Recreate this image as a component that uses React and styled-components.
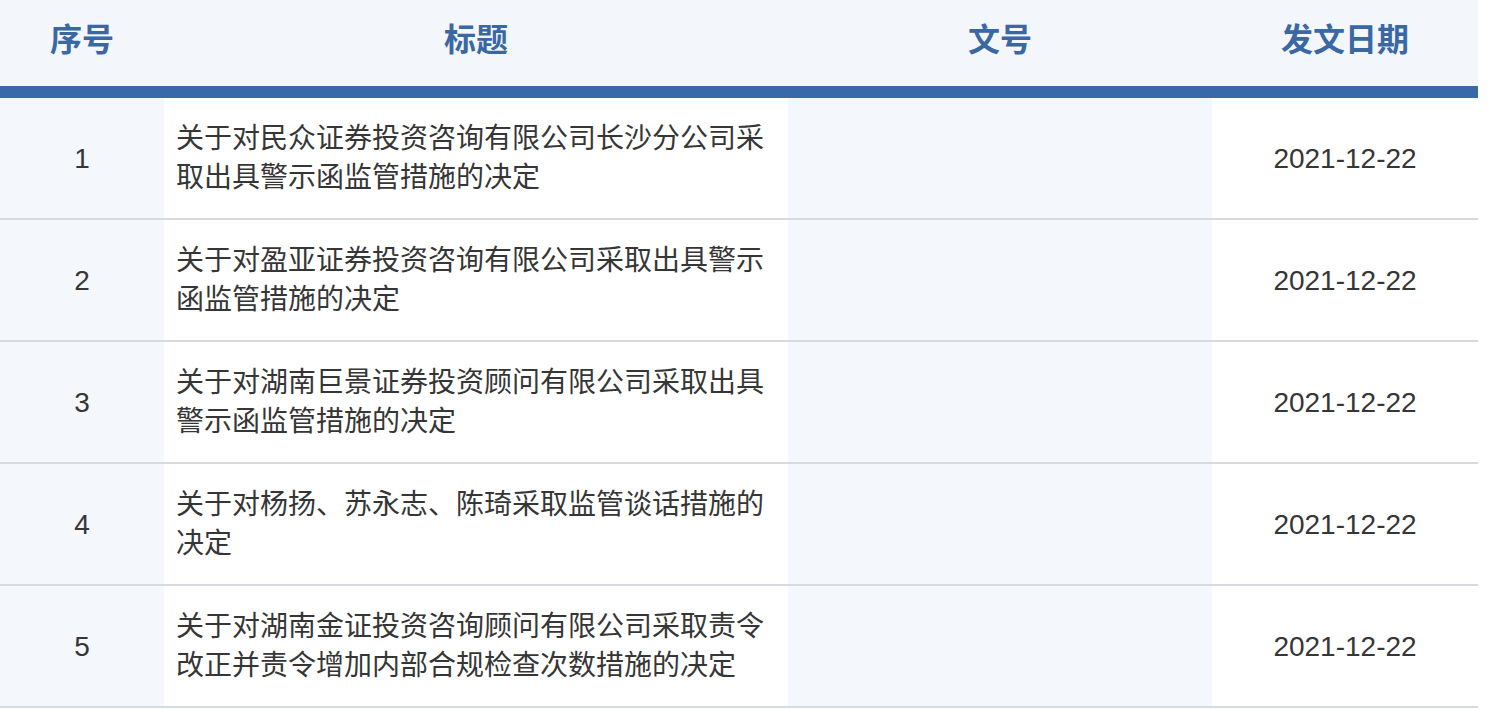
import React from "react";
import styled, { createGlobalStyle } from "styled-components";

const GlobalStyle = createGlobalStyle`
  body {
    margin: 0;
    background: #fff;
    font-family: "Liberation Sans", Arial, "Noto Sans CJK SC", sans-serif;
  }
`;

const rows = [
  {
    no: 1,
    title: "关于对民众证券投资咨询有限公司长沙分公司采取出具警示函监管措施的决定",
    doc: "",
    date: "2021-12-22",
  },
  {
    no: 2,
    title: "关于对盈亚证券投资咨询有限公司采取出具警示函监管措施的决定",
    doc: "",
    date: "2021-12-22",
  },
  {
    no: 3,
    title: "关于对湖南巨景证券投资顾问有限公司采取出具警示函监管措施的决定",
    doc: "",
    date: "2021-12-22",
  },
  {
    no: 4,
    title: "关于对杨扬、苏永志、陈琦采取监管谈话措施的决定",
    doc: "",
    date: "2021-12-22",
  },
  {
    no: 5,
    title: "关于对湖南金证投资咨询顾问有限公司采取责令改正并责令增加内部合规检查次数措施的决定",
    doc: "",
    date: "2021-12-22",
  },
];

function App() {
  return (
    <>
      <GlobalStyle />
      <Table>
        <colgroup>
          <col style={{ width: 164 }} />
          <col style={{ width: 624 }} />
          <col style={{ width: 424 }} />
          <col style={{ width: 266 }} />
        </colgroup>
        <thead>
          <tr>
            <Th>序号</Th>
            <Th>标题</Th>
            <Th>文号</Th>
            <Th>发文日期</Th>
          </tr>
        </thead>
        <tbody>
          {rows.map((r) => (
            <tr key={r.no}>
              <Td shade>{r.no}</Td>
              <Td left>{r.title}</Td>
              <Td shade>{r.doc}</Td>
              <Td>{r.date}</Td>
            </tr>
          ))}
        </tbody>
      </Table>
    </>
  );
}

const Table = styled.table`
  width: 1478px;
  table-layout: fixed;
  border-collapse: separate;
  border-spacing: 0;
`;

const Th = styled.th`
  box-sizing: border-box;
  height: 98px;
  padding: 0 0 6px;
  background: #f3f6fa;
  border-bottom: 12px solid #386aa9;
  color: #3a68a5;
  font-family: "Liberation Sans", "Noto Sans CJK SC", sans-serif;
  font-size: 32px;
  font-weight: 700;
  text-align: center;
  vertical-align: middle;
  line-height: 1;
`;

const Td = styled.td`
  box-sizing: border-box;
  height: 122px;
  padding: 0 ${(p) => (p.left ? "12px" : "0")};
  background: ${(p) => (p.shade ? "#f4f7fb" : "#fff")};
  border-bottom: 2px solid #d6dadf;
  color: #363636;
  font-family: "Liberation Sans", "Noto Sans CJK SC", sans-serif;
  font-size: 28px;
  line-height: 39px;
  text-align: ${(p) => (p.left ? "left" : "center")};
  vertical-align: middle;
`;

export default App;
